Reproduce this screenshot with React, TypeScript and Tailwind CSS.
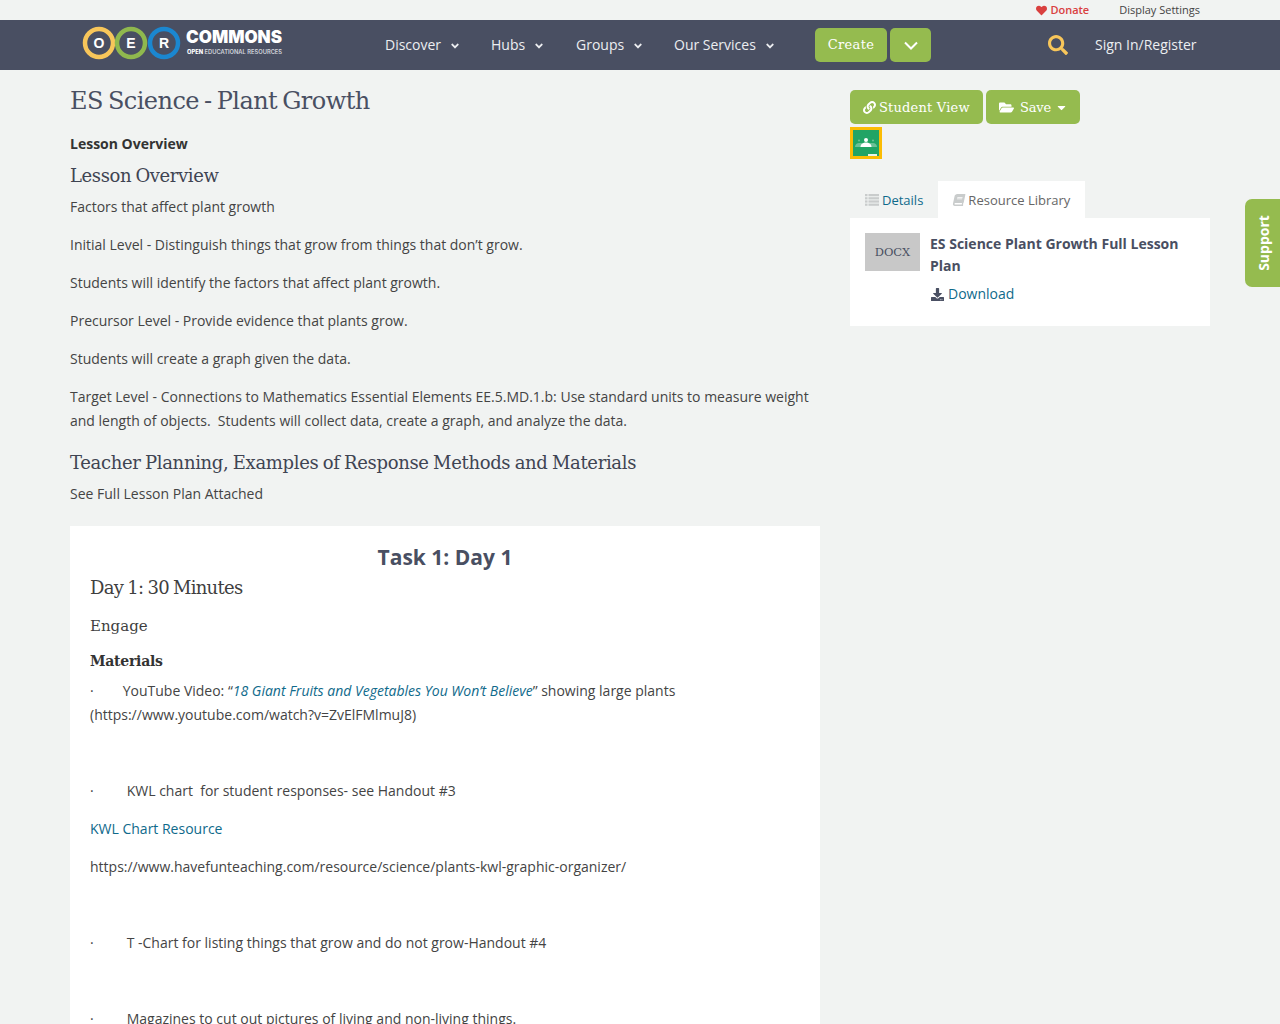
import { FaHeart, FaLink, FaFolderOpen, FaCaretDown, FaBook, FaDownload, FaSearch, FaAngleDown } from "react-icons/fa";

const slab = "font-['DejaVu_Serif',serif]";

function Logo() {
  const rings = [
    { cx: 17, color: "#f8c65a", letter: "O" },
    { cx: 49, color: "#8fb84e", letter: "E" },
    { cx: 82, color: "#1b87d0", letter: "R" },
  ];
  return (
    <div className="flex items-start">
      <svg width="100" height="36" viewBox="0 0 100 36">
        {rings.map((r) => (
          <g key={r.letter}>
            <circle cx={r.cx} cy="18" r="14" fill="none" stroke={r.color} strokeWidth="4.5" />
            <text x={r.cx} y="23" textAnchor="middle" fontFamily="Liberation Sans" fontWeight="700" fontSize="14" fill="#fff">
              {r.letter}
            </text>
          </g>
        ))}
      </svg>
      <div className="ml-[4px] flex flex-col text-white font-['Inter',sans-serif]">
        <span className="text-[17px] font-black leading-[15px] mt-[5.5px]">COMMONS</span>
        <span className="mt-[3px] ml-px text-[5.75px] font-semibold leading-[7px] whitespace-nowrap text-gray-300">
          <b className="font-extrabold text-white">OPEN</b> EDUCATIONAL RESOURCES
        </span>
      </div>
    </div>
  );
}

function NavItem({ label, className }: { label: string; className: string }) {
  return (
    <a className={`flex items-center text-[14px] text-[#eceef1] ${className}`}>
      {label}
      <FaAngleDown className="ml-[8px] mt-[2px] h-[12px] w-[12px]" />
    </a>
  );
}

function ClassroomIcon() {
  return (
    <div className="flex h-[32px] w-[32px] items-center justify-center border-[3px] border-[#fbbc04] bg-[#21a465]">
      <svg width="26" height="26" viewBox="0 0 26 26">
        <circle cx="6" cy="10.5" r="1" fill="#6cc197" />
        <circle cx="20" cy="10.5" r="1" fill="#6cc197" />
        <path d="M2 17c0-2.5 2-4 4-4h14c2 0 4 1.500 4 4z" fill="#6cc197" />
        <circle cx="13" cy="10" r="2" fill="#fff" />
        <path d="M7.500 17c0-2.800 2.500-4.500 5.500-4.500s5.500 1.700 5.500 4.500z" fill="#fff" />
        <rect x="15" y="24" width="9" height="2" fill="#e8f3ec" />
      </svg>
    </div>
  );
}

function ListIcon() {
  return (
    <svg width="14" height="12" viewBox="0 0 14 12" className="mr-[3px] text-[#c9cccc]" fill="currentColor">
      <rect x="0" y="0" width="2.500" height="2.200" />
      <rect x="3.500" y="0" width="10.500" height="2.200" />
      <rect x="0" y="3.200" width="2.500" height="2.200" />
      <rect x="3.500" y="3.200" width="10.500" height="2.200" />
      <rect x="0" y="6.400" width="2.500" height="2.200" />
      <rect x="3.500" y="6.400" width="10.500" height="2.200" />
      <rect x="0" y="9.600" width="2.500" height="2.200" />
      <rect x="3.500" y="9.600" width="10.500" height="2.200" />
    </svg>
  );
}

function Para({ children, className = "" }: { children: React.ReactNode; className?: string }) {
  return <p className={`mb-[14px] ${className}`}>{children}</p>;
}

export default function App() {
  return (
    <div className="relative h-[1024px] overflow-hidden bg-[#f1f3f2] font-['Open_Sans',sans-serif] text-[14px] leading-[24px] text-[#444]">
      {/* top strip */}
      <div className="flex h-[20px] items-center justify-end pr-[80px] text-[11px] leading-[20px]">
        <a className="flex items-center font-semibold text-[#d9403f]">
          <FaHeart className="mr-[3px] h-[11px] w-[11px]" />
          Donate
        </a>
        <a className="ml-[30px] text-[#444]">Display Settings</a>
      </div>

      {/* main nav */}
      <div className="flex h-[50px] items-center bg-[#494f62]">
        <div className="ml-[82px] mt-[-5px] w-[303px]">
          <Logo />
        </div>
        <NavItem label="Discover" className="w-[106px]" />
        <NavItem label="Hubs" className="w-[85px]" />
        <NavItem label="Groups" className="w-[98px]" />
        <NavItem label="Our Services" className="w-[141px]" />
        <button className={`h-[34px] w-[72px] rounded-[5px] bg-[#95bb4f] text-[13px] tracking-[0.3px] text-white ${slab}`}>Create</button>
        <button className="ml-[3px] flex h-[34px] w-[41px] items-center justify-center rounded-[5px] bg-[#95bb4f] text-white">
          <svg width="14" height="9" viewBox="0 0 14 9" fill="none" stroke="currentColor" strokeWidth="2">
            <path d="M1 1.500l6 6 6-6" />
          </svg>
        </button>
        <FaSearch className="ml-[117px] h-[20px] w-[20px] text-[#f8c65a]" />
        <a className="ml-[27px] text-[14px] text-[#eceef1]">Sign In/Register</a>
      </div>

      <div className="flex pl-[70px]">
        {/* left column */}
        <div className="w-[750px] shrink-0">
          <h1 className={`mt-[15px] text-[24px] leading-[32px] tracking-[-0.55px] [word-spacing:-2px] text-[#494f62] ${slab}`}>ES Science - Plant Growth</h1>
          <p className="mt-[15px] font-bold text-[#333]">Lesson Overview</p>
          <h2 className={`mt-[7px] mb-[6px] text-[18px] leading-[26px] tracking-[-0.4px] [word-spacing:-1px] text-[#3f4452] ${slab}`}>Lesson Overview</h2>
          <Para>Factors that affect plant growth</Para>
          <Para>Initial Level - Distinguish things that grow from things that don’t grow.</Para>
          <Para>Students will identify the factors that affect plant growth.</Para>
          <Para>Precursor Level - Provide evidence that plants grow.</Para>
          <Para>Students will create a graph given the data.</Para>
          <Para>
            Target Level - Connections to Mathematics Essential Elements EE.5.MD.1.b: Use standard units to measure weight and length of objects.&nbsp; Students will collect data, create a graph, and analyze the data.
          </Para>
          <h2 className={`mt-[17px] mb-[6px] text-[18px] leading-[26px] tracking-[-0.33px] [word-spacing:-1px] text-[#3f4452] ${slab}`}>
            Teacher Planning, Examples of Response Methods and Materials
          </h2>
          <p>See Full Lesson Plan Attached</p>

          <div className="mt-[20px] bg-white px-[20px] pt-[16px]">
            <h3 className="text-center text-[21px] font-bold leading-[30px] text-[#494f62]">Task 1: Day 1</h3>
            <h4 className={`mt-[2px] text-[18px] leading-[28px] tracking-[-0.7px] [word-spacing:-1px] text-[#3f3f3f] ${slab}`}>Day 1: 30 Minutes</h4>
            <h5 className={`mt-[12px] text-[15px] leading-[24px] text-[#3f3f3f] ${slab}`}>Engage</h5>
            <h6 className={`mt-[11px] text-[14px] font-bold leading-[24px] tracking-[-0.25px] text-[#333] ${slab}`}>Materials</h6>
            <p className="mt-[6px]">
              ·<span className="ml-[29px]">YouTube Video: “</span>
              <a className="italic text-[#0f6a8b]">18 Giant Fruits and Vegetables You Won’t Believe</a>
              <span>” showing large plants</span>
              <br />
              <span>(https://www.youtube.com/watch?v=ZvElFMlmuJ8)</span>
            </p>
            <p className="mt-[14px]">&nbsp;</p>
            <p className="mt-[14px]">
              ·<span className="ml-[33px]">KWL chart&nbsp; for student responses- see Handout #3</span>
            </p>
            <p className="mt-[14px]">
              <a className="text-[#0f6a8b]">KWL Chart Resource</a>
            </p>
            <p className="mt-[14px]">https://www.havefunteaching.com/resource/science/plants-kwl-graphic-organizer/</p>
            <p className="mt-[14px]">&nbsp;</p>
            <p className="mt-[14px]">
              ·<span className="ml-[33px]">T -Chart for listing things that grow and do not grow-Handout #4</span>
            </p>
            <p className="mt-[14px]">&nbsp;</p>
            <p className="mt-[14px]">
              ·<span className="ml-[33px]">Magazines to cut out pictures of living and non-living things.</span>
            </p>
          </div>
        </div>

        {/* right column */}
        <div className="ml-[30px] w-[360px] shrink-0 pt-[20px]">
          <div className="flex gap-[3px]">
            <button className={`flex h-[34px] w-[133px] items-center rounded-[5px] bg-[#95bb4f] pl-[13px] text-[13px] tracking-[0.2px] text-white ${slab}`}>
              <FaLink className="mr-[3px] h-[13px] w-[13px]" />
              <span className="mt-[1px]">Student View</span>
            </button>
            <button className={`flex h-[34px] w-[94px] items-center rounded-[5px] bg-[#95bb4f] pl-[13px] text-[13px] tracking-[-0.2px] text-white ${slab}`}>
              <FaFolderOpen className="mr-[6px] h-[15px] w-[15px]" />
              <span className="mt-[1px]">Save</span>
              <FaCaretDown className="ml-[4px] h-[13px] w-[13px]" />
            </button>
          </div>
          <div className="mt-[3px]">
            <ClassroomIcon />
          </div>
          <div className="mt-[22px] flex text-[13px]">
            <a className="flex h-[37px] items-center px-[15px] text-[#0f6a8b]">
              <ListIcon />
              Details
            </a>
            <a className="flex h-[37px] items-center bg-white pl-[15px] pr-[15px] text-[#666]">
              <FaBook className="mr-[3px] h-[12px] w-[12px] -skew-x-12 text-[#c9cccc]" />
              Resource Library
            </a>
          </div>
          <div className="flex h-[108px] bg-white pl-[15px] pr-[15px] pt-[15px]">
            <div className={`flex h-[38px] w-[55px] shrink-0 items-center justify-center bg-[#c8c8c8] text-[11.5px] text-[#494f62] ${slab}`}>DOCX</div>
            <div className="ml-[10px]">
              <p className="text-[14px] font-bold leading-[22px] text-[#494f62]">ES Science Plant Growth Full Lesson Plan</p>
              <a className="mt-[5px] ml-px flex items-center text-[#0f6a8b]">
                <FaDownload className="mr-[4px] h-[13px] w-[13px] text-[#494f62]" />
                Download
              </a>
            </div>
          </div>
        </div>
      </div>

      {/* support tab */}
      <div className="absolute right-0 top-[199px] flex h-[88px] w-[35px] items-center justify-center rounded-l-[7px] bg-[#95bb4f] pl-[2px]">
        <span className="-rotate-90 text-[14px] font-bold text-white">Support</span>
      </div>
    </div>
  );
}
